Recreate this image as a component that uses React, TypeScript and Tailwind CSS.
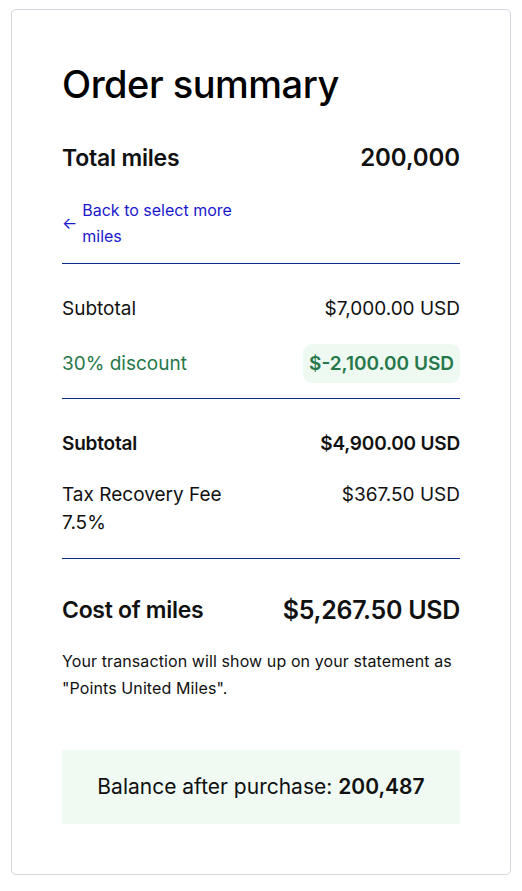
export default function App() {
  return (
    <div className="bg-white min-h-screen pt-[9px] px-[11px] font-['Inter',sans-serif] text-[#111]">
      <div className="w-[500px] h-[866px] rounded-[5px] border border-[#d4d6dd] px-[50px] pt-[46px]">
        <h1 className="text-[38px] leading-[56px] font-medium tracking-[-0.5px] text-black">Order summary</h1>

        <div className="mt-[32px] flex items-center justify-between leading-[28px]">
          <span className="text-[23px] font-semibold tracking-[-0.2px]">Total miles</span>
          <span className="text-[24px] font-semibold tracking-[-0.1px]">200,000</span>
        </div>

        <a href="#" className="mt-[25px] flex w-[190px] items-center gap-[5px] text-[16px] leading-[26px] text-[#1a17cc]">
          <span className="text-[16px]">←</span>
          <span>Back to select more miles</span>
        </a>

        <div className="mt-[14px] border-t border-[#0d2c85]" />

        <div className="mt-[31px] flex items-center justify-between text-[19px] leading-[28px]">
          <span>Subtotal</span>
          <span>$7,000.00 USD</span>
        </div>

        <div className="mt-[21px] flex items-center justify-between text-[19px] leading-[28px]">
          <span className="text-[#26784a]">30% discount</span>
          <span className="rounded-[9px] bg-[#eef9f1] px-[6px] py-[6px] font-semibold leading-[27px] text-[#26784a]">$-2,100.00 USD</span>
        </div>

        <div className="mt-[15px] border-t border-[#0d2c85]" />

        <div className="mt-[31px] flex items-center justify-between text-[19px] leading-[28px] font-semibold tracking-[-0.2px]">
          <span>Subtotal</span>
          <span>$4,900.00 USD</span>
        </div>

        <div className="mt-[23px] flex items-start justify-between text-[19px] leading-[28px]">
          <span className="w-[170px]">Tax Recovery Fee 7.5%</span>
          <span>$367.50 USD</span>
        </div>

        <div className="mt-[21px] border-t border-[#0d2c85]" />

        <div className="mt-[36px] flex items-center justify-between leading-[30px]">
          <span className="text-[23px] font-semibold tracking-[-0.3px]">Cost of miles</span>
          <span className="text-[25px] font-semibold tracking-[-0.3px]">$5,267.50 USD</span>
        </div>

        <p className="mt-[23px] text-[16px] leading-[27px] tracking-[0.1px]">
          Your transaction will show up on your statement as "Points United Miles".
        </p>

        <div className="mt-[48px] flex h-[74px] items-center justify-center bg-[#f0faf3] text-[21px]">
          <span>
            Balance after purchase: <span className="font-semibold">200,487</span>
          </span>
        </div>
      </div>
    </div>
  );
}
